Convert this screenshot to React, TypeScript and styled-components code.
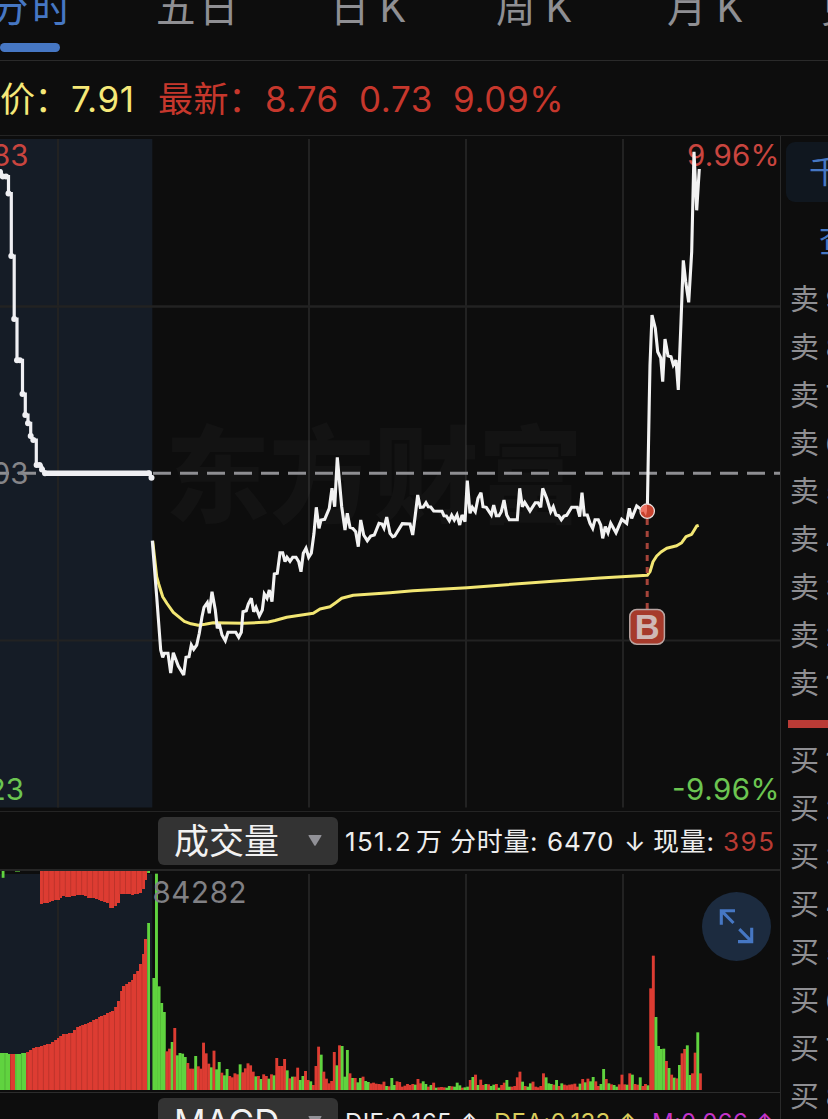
import React from "react";
import styled, { createGlobalStyle } from "styled-components";

const GlobalStyle = createGlobalStyle`
  * { box-sizing: border-box; }
  html, body { margin: 0; padding: 0; background: #0d0d0d; overflow: hidden; }
  body { font-family: Inter, "Noto Sans CJK SC", sans-serif; }
`;

const RED = "#dd3c32";
const GREEN = "#60d33f";
const LINE = "#242424";
const NAVY = "#151c26";

const Page = styled.div`
  width: 828px;
  height: 1119px;
  overflow: hidden;
  background: #0d0d0d;
  display: flex;
  flex-direction: column;
`;

const Tabs = styled.nav`
  height: 61px;
  flex: none;
  display: flex;
  border-bottom: 1px solid #2a2a2a;
  overflow: hidden;
`;

const Tab = styled.div<{ $width: number; $active?: boolean; $indent?: number }>`
  width: ${(p) => p.$width}px;
  flex: none;
  display: flex;
  flex-direction: column;
  white-space: nowrap;
  font-family: "Noto Sans CJK SC", sans-serif;
  font-size: 39.5px;
  line-height: 58px;
  letter-spacing: 3.5px;
  margin-top: -24px;
  text-indent: ${(p) => p.$indent ?? 0}px;
  color: ${(p) => (p.$active ? "#4677c3" : "#8f8f93")};
`;

const Latin = styled.span`
  font-family: Inter, sans-serif;
  font-size: 40px;
  margin-left: 6.5px;
`;

const TabMark = styled.i`
  width: 60px;
  height: 9px;
  margin-top: 9px;
  border-radius: 4.5px;
  background: #4677c3;
`;

const Quote = styled.div`
  height: 75px;
  flex: none;
  display: flex;
  align-items: center;
  border-bottom: 1px solid ${LINE};
  padding-top: 1px;
  font-size: 35px;
  line-height: 74px;
  white-space: nowrap;
`;

const QuoteCell = styled.span<{ $width: number; $color: string; $track?: number }>`
  width: ${(p) => p.$width}px;
  flex: none;
  color: ${(p) => p.$color};
  letter-spacing: ${(p) => p.$track ?? 0.6}px;
`;

const Colon = styled.span`
  margin-left: -1px;
`;

const Body = styled.div`
  flex: 1;
  min-height: 0;
  display: grid;
  grid-template-columns: 781px 47px;
`;

const Main = styled.main`
  border-right: 1px solid #2a2a2a;
  display: flex;
  flex-direction: column;
  overflow: hidden;
`;

const PriceSvg = styled.svg`
  display: block;
  flex: none;
  width: 780px;
  height: 675px;
  font-family: Inter, sans-serif;
`;

const VolumePane = styled.section`
  position: relative;
  flex: none;
  height: 222px;
  border-bottom: 1px solid #2c2c2c;
`;

const VolumeSvg = styled.svg`
  display: block;
  width: 780px;
  height: 221px;
  font-family: Inter, sans-serif;
`;

const Expand = styled.button`
  position: absolute;
  right: 9px;
  top: 21px;
  width: 69px;
  height: 69px;
  padding: 0;
  border: 0;
  border-radius: 50%;
  background: #1c2b3f;
`;

const InfoBar = styled.div<{ $last?: boolean }>`
  flex: none;
  height: 60px;
  border-top: ${(p) => (p.$last ? 0 : 1)}px solid ${LINE};
  border-bottom: 2px solid #262626;
  padding: 5px 0 0 158px;
  display: flex;
  align-items: flex-start;
  white-space: nowrap;
`;

const Picker = styled.div`
  width: 180px;
  height: 48px;
  flex: none;
  border-radius: 6px;
  background: #333333;
  color: #f2f2f2;
  display: flex;
  align-items: center;
  justify-content: space-between;
  padding: 0 16px;
  margin-right: 7px;
  font-size: 35px;
  line-height: 48px;
`;

const Arrow = styled.svg`
  width: 14px;
  height: 11px;
  margin-bottom: 1px;
`;

const Stat = styled.span<{ $width: number; $color?: string; $size?: number; $track?: number }>`
  width: ${(p) => p.$width}px;
  flex: none;
  font-size: ${(p) => p.$size ?? 26}px;
  line-height: 49px;
  letter-spacing: ${(p) => p.$track ?? 0.7}px;
  color: ${(p) => p.$color ?? "#ededed"};
`;

const Side = styled.aside`
  padding: 6px 0 0 5px;
  overflow: hidden;
  display: flex;
  flex-direction: column;
  white-space: nowrap;
`;

const SideTab = styled.div<{ $active?: boolean; $indent: number }>`
  flex: none;
  width: 160px;
  height: 60px;
  border-radius: 9px;
  line-height: 60px;
  font-size: 32px;
  padding-left: ${(p) => p.$indent}px;
  margin-bottom: ${(p) => (p.$active ? 9 : 0)}px;
  color: #4677c3;
  background: ${(p) => (p.$active ? "#10171f" : "transparent")};
`;

const Level = styled.div`
  flex: none;
  height: 48px;
  line-height: 48px;
  display: flex;
  gap: 6.5px;
  padding-left: 4px;
  font-size: 29px;
  color: #8f8f93;
`;

const Levels = styled.div<{ $top: number }>`
  flex: none;
  margin-top: ${(p) => p.$top}px;
`;

const Divider = styled.div`
  flex: none;
  height: 8px;
  margin: 12px 0 0 2px;
  background: #b93b36;
`;

const PRICE =
  "152.3,540.7 156.7,596.7 160.7,650 162.7,657.3 164.3,653.3 168,653.3 170.7,673 173.3,652.7 178.3,666 183.7,675 186,657.3 189,656.7 191.3,645 193.7,649.3 196.7,645 199.3,633.3 202,616.7 204,607.3 207.3,602.7 209.3,613.3 212,591.7 215.3,610 217.3,628.3 219.3,624 222,635 225.3,640.7 228,632.3 235.7,632.3 238.7,637.3 241.3,632.3 243,611.7 246.3,610.7 248.3,604 251.3,598.3 253.7,611.7 256,607.3 259.3,616 262.3,610 264.3,594 267,598.3 269.3,590 272,601.7 274.3,574 277.3,573.3 280,552.7 282.7,552.7 285,561.7 287,557.3 290,561.3 292.7,557.3 296,557.3 298.7,561.7 301,571.7 303.3,553.3 306,548.3 308.7,557.3 311.3,553.3 314,533.3 316.3,507.3 319,528.3 321,520 324.7,519.3 329.3,508.3 332,488.3 334.7,506.7 337.3,457.3 341.7,506.7 345,530 347.3,513.3 350,527.3 352.7,528.3 355.7,531.7 358.3,546.7 360.7,520 363.7,535 367.3,540.7 370.7,536 374.3,535 379,523.3 382,524 384,528 386.7,517 390,533.3 392.7,536.7 394.7,536 402.3,523.7 410,524 412.7,535 415.3,515 417.7,495 420.3,507.3 423.3,507 426,502.7 428.3,506.7 430.7,507 433.7,511 442,511.3 444,515.7 446.3,516 449.3,520.7 451.7,515.3 454.3,520 457,515 459.7,525 462,515 465,521.7 467.3,480.7 470,513.3 472.3,507.3 475.3,511.7 478,498.3 481,492.7 483,506.7 486.3,507.3 491.3,515 493.7,505 496.3,515.7 499,515.7 501.3,511.7 504,500 506.7,515 509.3,519.7 517.3,519.7 519.7,488.3 522.3,506.7 524.7,502.3 530,511 535.3,502.7 538,502.7 540.7,507.3 542.7,488.3 546.7,498.3 550.7,511.7 553.3,506.7 556,515 558.7,515.7 561.3,519.7 564,516 566.7,515.3 571.7,507.3 577.3,507.3 579.7,516.7 582,492.7 584.3,515 587.3,515 590,523.3 592.7,528.3 595,519.7 598.3,519.7 600.7,525 602.7,538.3 605.3,526.7 608,532.7 610.7,523.3 616,532.7 621.7,519.3 626.7,523.3 629.3,508.3 631.7,518.3 636.7,506 639.3,508 645,511 647.3,511 649.3,400 650,365 652,315 655.3,328.3 657.7,351.7 660.7,357.7 662.7,381.7 665,339 668,355.7 671,356.7 673.3,365 676,360 678.3,390 681,321.7 683.3,260.3 685.7,281.7 688.7,302.3 691.7,251.7 694,151.7 696.7,210.3 699.3,169";

const AVERAGE =
  "152.7,541 156.7,576.7 158.7,584 162.7,596.7 167,603.5 173.3,612.3 184.3,621.3 191,623.8 198.3,625.3 205,624.3 213.3,622.8 243.3,623.3 268.3,622 275,620.5 286.7,617.3 313.3,613.3 320,609 330,606.7 336,602.5 341.7,598.3 353.3,595.3 390,592.7 413,590.7 467,587.7 506.7,584.7 553,581.3 600,578 647.3,575.3 650,571.7 653,561.7 656.7,556 661,552 666.7,548.3 676.7,545.7 681.7,542.7 686,536.7 691.7,534.3 696.7,526 698.7,525.3";

const AUCTION =
  "0,170 2.7,176.7 8.5,176.7 8.5,193.5 11.3,193.5 11.3,256 14.2,256 14.2,319 17,319 17,360.3 22.5,360.3 22.5,394 25.3,394 25.3,415 28,415 28,423.3 30.7,423.3 30.7,436 33.3,440 36.3,440 36.3,465 41,465 45,473.3 149.3,473.3 151.7,477.7";

const AUCTION_DOTS: [number, number][] = [
  [0, 172], [2.7, 176.5], [6, 176.5], [8.5, 193.5], [11.3, 256], [14.2, 319], [17, 360.3], [19.8, 360.3],
  [22.5, 394], [25.3, 415], [28, 423.3], [30.7, 436], [33.3, 440], [36.6, 465], [39.5, 465], [42, 469.5],
  [45, 473.3], [149, 473.3], [151.5, 477.7],
];

/* Heights are in thirds of a pixel, one entry a minute. */
const VOLUME = `336G 649G 311G 261G 234G 116R 124R 144G 186R 104G 111G 109G 99G 81R 64R 64R 102G 71R 64R 142R
110R 79R 68G 118R 62G 84G 52R 44G 63G 42R 38R 50R 47R 77G 53R 65R 80R 74R 55R 41G 42R 33G 47R 42R 34G 47R 44G
96R 72R 72R 93R 59G 35R 40G 40R 67R 30G 42G 57R 30R 26G 15R 72R 130R 106G 55R 34R 20R 27R 114R 74G 134R 132G
40G 120G 50R 36G 36R 23G 36G 40R 27G 24G 20R 22R 19R 18R 17R 25R 12G 11R 36G 15G 26R 24R 10R 13R 18R 15R 18R
16G 33R 20R 26G 18G 10R 15G 22R 7G 8R 9R 8R 7G 12G 11R 10G 22G 14G 7R 8G 10G 30R 39G 46R 15G 31R 15R 18G 17R
12G 16G 18R 7G 15R 22R 30G 10G 10R 12R 38R 55R 25G 12R 10G 20G 25R 10R 8R 12R 50R 38G 20G 18G 16R 30G 12R 20G
16R 14R 16R 17R 19R 10R 19G 33R 23G 34R 26G 39G 26R 12R 18G 63G 33R 20G 17R 15G 10G 17R 46R 17R 16G 50R 46G
18R 16R 38G 12R 18R 14G 305R 403R 219G 132G 123G 124G 87R 66G 46R 37G 35R 75G 110R 123R 134G 45G 50R 112R 173G 50R`
  .split(/\s+/)
  .map((s) => ({ h: parseInt(s, 10) / 3, color: s.endsWith("G") ? GREEN : RED }));

const PROFILE_LOW: [number, number][] = [
  [0, 1052.7], [10, 1054.3], [15, 1054], [26, 1052.3], [27, 1051.2], [32, 1048.3], [40, 1045.7], [50, 1043.3],
  [58, 1036.7], [62, 1034.5], [70.5, 1032.5], [75, 1027.3], [88, 1022.3], [100, 1016], [112, 1010.7], [116, 1004.5],
  [119, 991.7], [122, 986], [130, 981], [133.5, 974], [137, 969.5], [139.5, 961.7], [141.5, 954], [144.3, 939], [147, 923.3],
];

const PROFILE_TOP: [number, number][] = [
  [40, 903.7], [47, 903], [51, 900.7], [57, 900], [60, 897], [62, 896], [67, 897.3], [75, 895], [84, 895.7], [87, 897.7],
  [93, 898.3], [100, 900.7], [107, 903.3], [108.4, 908.3], [113, 907.7], [115, 905.5], [117.5, 902.5], [119.4, 894.3],
  [125, 893.7], [132.5, 895.3], [134, 893], [137, 894.3], [139, 892.3], [141.7, 889], [144.3, 880], [147, 872.7],
];

const sample = (p: [number, number][], x: number) => {
  for (let i = 1; i < p.length; i++) {
    if (x <= p[i][0]) {
      const t = (x - p[i - 1][0]) / (p[i][0] - p[i - 1][0]);
      return p[i - 1][1] + Math.max(0, t) * (p[i][1] - p[i - 1][1]);
    }
  }
  return p[p.length - 1][1];
};

const AUCTION_BARS = Array.from({ length: 55 }, (_, i) => {
  const x = 147 - 2.74 * (54 - i);
  const green = x < 9 || (x > 14 && x < 25.5) || i === 54;
  return { x, y: sample(PROFILE_LOW, x), color: green ? GREEN : RED };
});

const GRID_X = [58, 309, 466, 623];

function PriceChart() {
  return (
    <PriceSvg viewBox="0 136 780 675">
      <rect x="0" y="139" width="152.3" height="668.5" fill={NAVY} />
      <g stroke="#222222" strokeWidth="2">
        {GRID_X.map((x) => (
          <line key={x} x1={x} x2={x} y1="139" y2="807.5" />
        ))}
        <line x1="0" x2="780" y1="306.5" y2="306.5" strokeWidth="2.6" />
        <line x1="0" x2="780" y1="640.5" y2="640.5" />
      </g>
      <text x="165" y="514" fontFamily="Noto Sans CJK SC" fontWeight="900" fontSize="105" textLength="418" fill="#ffffff" fillOpacity="0.028">
        东方财富
      </text>
      <line x1="-9" x2="780" y1="473.3" y2="473.3" stroke="#8e8e92" strokeWidth="2.9" strokeDasharray="18 9" />
      <g fontSize="29.5">
        <g textAnchor="end">
          <text x="28.5" y="165.6" fill="#c9453f">8.83</text>
          <text x="28.5" y="483.6" fill="#858589">8.03</text>
          <text x="24" y="800.2" fill="#6cc551">7.23</text>
        </g>
        <text x="687" y="165.6" fill="#c9453f" textLength="92.5">9.96%</text>
        <text x="672" y="800.2" fill="#6cc551" textLength="107.5">-9.96%</text>
      </g>
      <polyline points={AUCTION} fill="none" stroke="#efeff3" strokeWidth="3.2" />
      <line x1="45" x2="150" y1="473.3" y2="473.3" stroke="#efeff3" strokeWidth="5.6" />
      {AUCTION_DOTS.map(([x, y], i) => (
        <circle key={i} cx={x} cy={y} r="3" fill="#efeff3" />
      ))}
      <polyline points={AVERAGE} fill="none" stroke="#f2e673" strokeWidth="3" strokeLinejoin="round" />
      <polyline points={PRICE} fill="none" stroke="#f2f2f2" strokeWidth="3.1" strokeMiterlimit="3" />
      <line x1="647.2" x2="647.2" y1="519" y2="609" stroke="#a5443a" strokeWidth="3" strokeDasharray="6 6" />
      <circle cx="647.2" cy="511.2" r="7.2" fill="#c8432f" stroke="#eadfdd" strokeWidth="1.3" />
      <path d="M647 511 L647 504.5 A6.5 6.5 0 0 0 641 512.5 L643.5 511.5 L646 516 Z" fill="#ee7465" />
      <rect x="629.8" y="609.6" width="34.6" height="34.6" rx="7" fill="#a63a2b" stroke="#b9a5a2" strokeWidth="1.5" />
      <text x="647.3" y="638.9" fontFamily="Liberation Sans" fontSize="34.5" fontWeight="700" textAnchor="middle" fill="#cfb8b5">
        B
      </text>
    </PriceSvg>
  );
}

function VolumeChart() {
  return (
    <VolumeSvg viewBox="0 871 780 221">
      <rect x="0" y="874" width="152.3" height="216" fill={NAVY} />
      <g stroke="#222222" strokeWidth="2">
        {GRID_X.map((x) => (
          <line key={x} x1={x} x2={x} y1="874" y2="1090" />
        ))}
      </g>
      <g shapeRendering="crispEdges">
        {AUCTION_BARS.map((b, i) => (
          <rect key={i} x={b.x} y={b.y} width="3" height={1090 - b.y} fill={b.color} />
        ))}
        {AUCTION_BARS.filter((b) => b.x > 39).map((b, i) => {
          const bottom = sample(PROFILE_TOP, b.x);
          return <rect key={i} x={b.x} y="871" width="3" height={bottom - 871} fill={b.x > 146 ? GREEN : RED} />;
        })}
      </g>
      {AUCTION_BARS.filter((_, i) => i % 2 === 0).map((b, i) => (
        <g key={i} fill="#000000" fillOpacity="0.16">
          <rect x={b.x} y={b.y} width="0.9" height={1090 - b.y} />
          {b.x > 40 && <rect x={b.x} y="871" width="0.9" height={sample(PROFILE_TOP, b.x) - 871} />}
        </g>
      ))}
      <g fill={GREEN}>
        <rect x="1.7" y="871" width="2.8" height="6.8" />
        <rect x="15" y="871" width="5" height="0.6" />
      </g>
      {VOLUME.map((b, i) => (
        <rect key={i} x={152.4 + i * 2.615} y={1090 - b.h} width="2.9" height={b.h} fill={b.color} />
      ))}
      <text x="152.5" y="902.8" fontSize="29.5" fill="#808084" textLength="94">
        84282
      </text>
    </VolumeSvg>
  );
}

const DownTriangle = () => (
  <Arrow viewBox="0 0 14 11">
    <path d="M1 0H13Q14 0 13.4 1L7.8 10.3Q7 11.3 6.2 10.3L0.6 1Q0 0 1 0Z" fill="#919197" />
  </Arrow>
);

export default function App() {
  return (
    <Page>
      <GlobalStyle />
      <Tabs>
        <Tab $width={156} $active $indent={-11}>
          分时
          <TabMark />
        </Tab>
        <Tab $width={174}>五日</Tab>
        <Tab $width={166}>
          <span>日<Latin>K</Latin></span>
        </Tab>
        <Tab $width={171}>
          <span>周<Latin>K</Latin></span>
        </Tab>
        <Tab $width={154}>
          <span>月<Latin>K</Latin></span>
        </Tab>
        <Tab $width={90}>更多</Tab>
      </Tabs>
      <Quote>
        <QuoteCell $width={71} $color="#f5e878">价<Colon>：</Colon></QuoteCell>
        <QuoteCell $width={87} $color="#f5e878">7.91</QuoteCell>
        <QuoteCell $width={107} $color="#c6372c">最新<Colon>：</Colon></QuoteCell>
        <QuoteCell $width={94} $color="#c6372c">8.76</QuoteCell>
        <QuoteCell $width={94} $color="#c6372c">0.73</QuoteCell>
        <QuoteCell $width={120} $color="#c6372c">9.09%</QuoteCell>
      </Quote>
      <Body>
        <Main>
          <PriceChart />
          <InfoBar>
            <Picker>
              成交量
              <DownTriangle />
            </Picker>
            <Stat $width={71} $track={1.3}>151.2</Stat>
            <Stat $width={34}>万</Stat>
            <Stat $width={97}>分时量:</Stat>
            <Stat $width={77} $track={0.9}>6470</Stat>
            <Stat $width={29}>↓</Stat>
            <Stat $width={70}>现量:</Stat>
            <Stat $width={56} $color="#b93b33" $track={1.5}>395</Stat>
          </InfoBar>
          <VolumePane>
            <VolumeChart />
            <Expand aria-label="expand">
              <svg width="69" height="69" viewBox="702 892 69 69" fill="none" stroke="#4677c3" strokeWidth="3.1">
                <path d="M735 910.7H721.3V924.7M721.3 910.7L733.5 923M738 941.6H751.7V927.7M751.7 941.6L739.3 929.2" />
              </svg>
            </Expand>
          </VolumePane>
          <InfoBar $last>
            <Picker>
              MACD
              <DownTriangle />
            </Picker>
            <Stat $width={149} $size={24} $track={0.4}>DIF:0.165 ↑</Stat>
            <Stat $width={158} $size={24} $track={0.3} $color="#d9cc5a">DEA:0.133 ↑</Stat>
            <Stat $width={130} $size={24} $track={0.2} $color="#c433c8">M:0.066 ↑</Stat>
          </InfoBar>
        </Main>
        <Side>
          <SideTab $active $indent={23}>千股千评</SideTab>
          <SideTab $indent={33}>查看</SideTab>
          <Levels $top={5}>
            {[9, 8, 7, 6, 5, 4, 3, 2, 1].map((n) => (
              <Level key={n}>
                <span>卖</span>
                <span>{n}</span>
              </Level>
            ))}
          </Levels>
          <Divider />
          <Levels $top={9}>
            {[1, 2, 3, 4, 5, 6, 7, 8].map((n) => (
              <Level key={n}>
                <span>买</span>
                <span>{n}</span>
              </Level>
            ))}
          </Levels>
        </Side>
      </Body>
    </Page>
  );
}
